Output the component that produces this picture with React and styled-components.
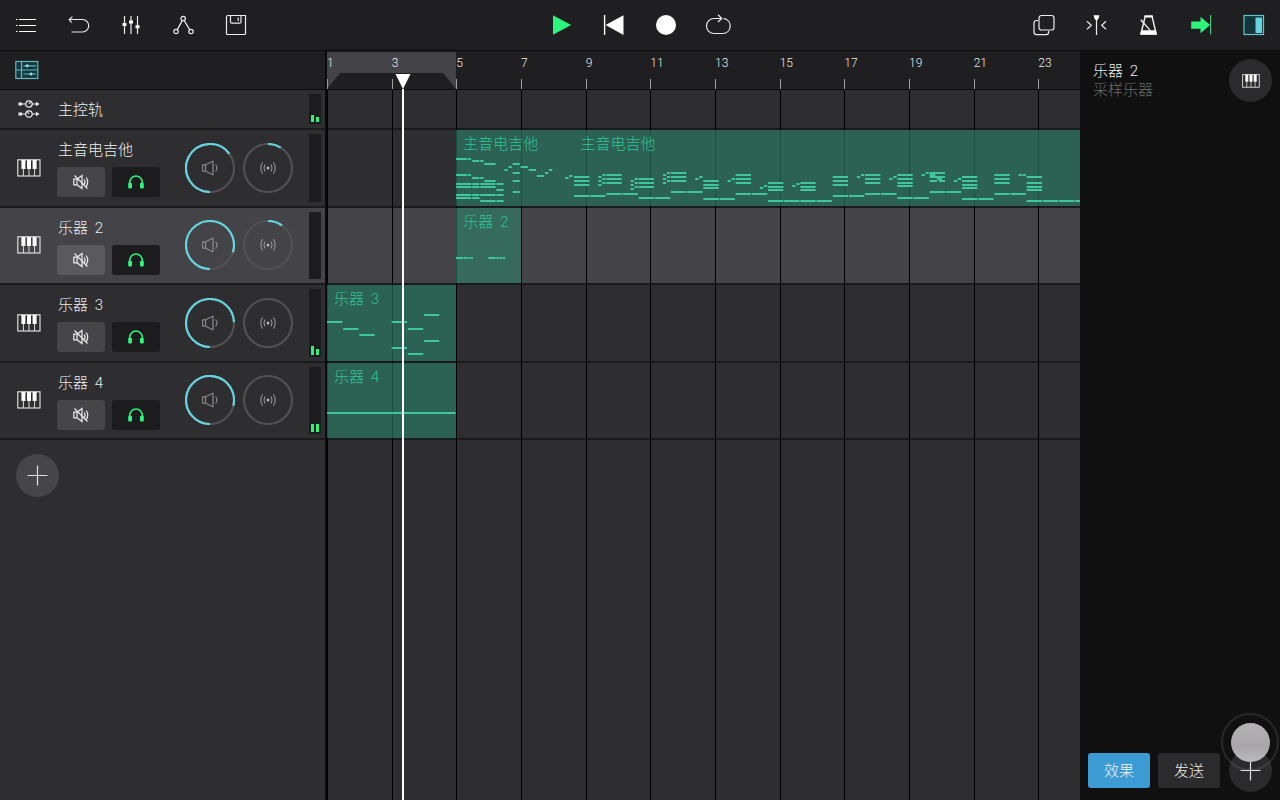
import React, { useLayoutEffect, useRef, useState } from "react";
import styled, { createGlobalStyle, ThemeProvider } from "styled-components";

const theme = {
  bar: "#1f1f21",
  panel: "#2e2e30",
  selected: "#444347",
  inset: "#1c1c1e",
  button: "#464648",
  line: "#0b0b0d",
  separator: "#1b1b1d",
  text: "#ececec",
  cyan: "#66d4e0",
  green: "#2cf57c",
  note: "#40c69c",
  clipText: "#2fc397",
  blue: "#3d9bd3",
  inspector: "#101010",
};

const Global = createGlobalStyle`
  *, *::before, *::after { box-sizing: border-box; }
  html, body { margin: 0; background: #101010; }
  body, button, input {
    font-family: Roboto, "Noto Sans CJK SC", sans-serif;
    font-weight: 300;
    font-size: 15px;
    line-height: 20px;
  }
  button { margin: 0; padding: 0; border: 0; background: none; color: inherit; cursor: pointer; }
  svg { display: block; flex: none; }
`;

/* ---------- timeline metrics ---------- */

const STEPS_PER_COLUMN = 16;
const COLUMN_WIDTH = 194 / 3;
const STEP = COLUMN_WIDTH / STEPS_PER_COLUMN;

/* Number of ruler columns needed to fill the element. */
const useColumns = () => {
  const ref = useRef(null);
  const [columns, setColumns] = useState(12);
  useLayoutEffect(() => {
    const measure = () => setColumns(Math.max(12, Math.ceil(ref.current.clientWidth / COLUMN_WIDTH)));
    measure();
    window.addEventListener("resize", measure);
    return () => window.removeEventListener("resize", measure);
  }, []);
  return [ref, columns];
};

/* ---------- icons ---------- */

const Icon = ({ size = 30, w, h, children }) => (
  <svg
    width={w || size}
    height={h || size}
    viewBox={`0 0 ${w || size} ${h || size}`}
    fill="none"
    stroke="currentColor"
    strokeWidth="1.2"
    aria-hidden="true"
  >
    {children}
  </svg>
);

const MenuIcon = () => (
  <Icon>
    <path d="M8 9.5H25M8 15.5H25M8 21.5H25" stroke="#fff" />
    <path d="M5 9.5H6.5M5 15.5H6.5M5 21.5H6.5" stroke="#fff" />
  </Icon>
);
const UndoIcon = () => (
  <Icon>
    <path d="M5.5 9.5H18.5A6 6 0 0 1 18.5 22H7.5" />
    <path d="M8.4 6.6L5.2 9.5L7.6 12.6" />
  </Icon>
);
const MixerIcon = () => (
  <Icon>
    <path d="M8.5 6V24M15 6V24M21.5 6V24" />
    <path d="M6.5 14.5H10.5M13 12H17M19.5 16.8H23.5" stroke="#fff" strokeWidth="3" />
  </Icon>
);
const AutomationIcon = () => (
  <Icon>
    <circle cx="15.2" cy="8.5" r="2.2" />
    <circle cx="8" cy="21.5" r="2.2" />
    <circle cx="23" cy="21.5" r="2.2" />
    <path d="M14.2 10.6L9.3 19.6M16.2 10.6L21.7 19.6" />
  </Icon>
);
const SaveIcon = () => (
  <Icon>
    <path d="M7 5.5H24.5V23.5Q24.5 24.5 23.5 24.5H6.5Q5.5 24.5 5.5 23.5V7Q5.5 5.5 7 5.5Z" />
    <path d="M9.5 5.5V12Q9.5 13.2 10.7 13.2H18.8Q20 13.2 20 12V5.5M17.2 7.5V11" />
  </Icon>
);
const PlayIcon = () => (
  <Icon>
    <path d="M7 5.2L25.2 15L7 24.8Z" fill="#2cf57c" stroke="none" />
  </Icon>
);
const RewindIcon = () => (
  <Icon>
    <path d="M24.5 5.2V25L6.6 15Z" fill="#fff" stroke="none" />
    <path d="M5.6 5V25" stroke="#fff" strokeWidth="1.4" />
  </Icon>
);
const RecordIcon = () => (
  <Icon>
    <circle cx="15" cy="15" r="10" fill="#fff" stroke="none" />
  </Icon>
);
const LoopIcon = () => (
  <Icon>
    <path d="M17.5 8.5H10A7.5 7.5 0 0 0 10 23.5H19.5A7.6 7.6 0 0 0 20.5 8.6H19.6" />
    <path d="M14 4.8L17.8 8.5L14 12" />
  </Icon>
);
const CopyIcon = () => (
  <Icon>
    <rect x="10" y="5.5" width="15" height="14.5" rx="2.5" />
    <path d="M9 10.5H7.5Q5 10.5 5 13V22Q5 24.7 7.5 24.7H17Q19.7 24.7 19.7 22V21" />
  </Icon>
);
const SnapIcon = () => (
  <Icon>
    <path d="M14.5 9V25" />
    <path d="M11.5 5.2H17.5L16.5 8.5L14.5 11L12.5 8.5Z" fill="#fff" stroke="none" />
    <path d="M5 11.2L9.3 15.2L5 19.2M24 11.2L19.7 15.2L24 19.2" />
  </Icon>
);
const MetronomeIcon = () => (
  <Icon>
    <path d="M11.2 6.2H18L22.2 23.8H7Z" strokeWidth="1.5" />
    <path d="M7.6 20.2H21.6L23 24.8H6Z" fill="#fff" stroke="none" />
    <path d="M6.8 9.8L16.2 20.4" strokeWidth="1.4" />
    <path d="M10.4 5.6H18.8L18.5 7.6H10.7Z" fill="#fff" stroke="none" />
  </Icon>
);
const FollowIcon = () => (
  <Icon>
    <path d="M5.2 11.5H14.5V6.8L24 15L14.5 23.2V18.7H5.2Z" fill="#2cf57c" stroke="none" />
    <path d="M24.6 5V24.6" stroke="#4bbf7a" />
  </Icon>
);
const SidePanelIcon = () => (
  <Icon>
    <rect x="5" y="5.5" width="19.5" height="19" fill="#14353a" stroke="#66c4cf" />
    <rect x="16.5" y="7.5" width="6.5" height="15.5" fill="#66d4e0" stroke="none" />
  </Icon>
);
const TrackViewIcon = () => (
  <Icon w={24} h={20}>
    <rect x="0.8" y="1.5" width="22" height="17" fill="#12393e" stroke="#67b6c0" />
    <path d="M6.5 1.5V18.5M1 10H23" stroke="#67b6c0" />
    <path d="M8.5 5.8H21M8.5 14H21" stroke="#67b6c0" />
    <circle cx="12.2" cy="5.8" r="1.5" fill="#8fe0e8" stroke="none" />
    <circle cx="16" cy="14" r="1.5" fill="#8fe0e8" stroke="none" />
  </Icon>
);
const MasterIcon = () => (
  <Icon w={24} h={20}>
    <circle cx="12" cy="5" r="3.2" />
    <circle cx="12" cy="15" r="3.2" />
    <path d="M4 5H8.8M15.2 5H21M4 15H8.8M15.2 15H21M12 5L13.5 3M12 15L10.5 13" />
    <path d="M1.5 3.4H5V6.6H1.5ZM1.5 13.4H5V16.6H1.5ZM19 2.8L22.5 5L19 7.2ZM19 12.8L22.5 15L19 17.2Z" fill="#eee" stroke="none" />
  </Icon>
);
const KeysIcon = ({ small }) => (
  <svg width={small ? 18 : 24} height={small ? 14 : 18} viewBox="0 0 24 18" preserveAspectRatio="none" fill="none" aria-hidden="true">
    <rect x="0.8" y="0.8" width="22.2" height="16.2" stroke="#ddd" strokeWidth="1.2" />
    <path d="M6.4 10V17M12 10V17M17.6 10V17" stroke="#ddd" />
    <path d="M4.4 1H8.4V10H4.4ZM10 1H14V10H10ZM15.6 1H19.6V10H15.6Z" fill="#fff" />
  </svg>
);
const MuteIcon = () => (
  <Icon w={18} h={16}>
    <path d="M1.8 5.2H5V10.8H1.8ZM5 5.2L10 1.5V14.5L5 10.8" />
    <path d="M12.2 5.5Q14 8 12.2 10.5M14.2 3.5Q17.2 8 14.2 12.5M2.5 1.5L15.5 14.5" />
  </Icon>
);
const HeadphonesIcon = () => (
  <Icon w={18} h={16}>
    <path d="M2.6 11V8.8A6.4 6.8 0 0 1 15.4 8.8V11" stroke="#2cf57c" strokeWidth="1.6" />
    <rect x="1.2" y="8.8" width="3.8" height="5.6" rx="1.2" fill="#2cf57c" stroke="none" />
    <rect x="13" y="8.8" width="3.8" height="5.6" rx="1.2" fill="#2cf57c" stroke="none" />
  </Icon>
);
const PlusIcon = () => (
  <Icon w={21} h={21}>
    <path d="M10.5 0.5V20.5M0.5 10.5H20.5" stroke="#e0e0e0" />
  </Icon>
);

/* ---------- shared parts ---------- */

const Num = styled.span`
  padding-left: 3px;
`;

const TrackName = ({ name, number }) => (
  <>
    {name}
    {number && <> <Num>{number}</Num></>}
  </>
);

const RoundButton = styled.button`
  display: grid;
  place-items: center;
  flex: none;
  width: 43px;
  height: 43px;
  border-radius: 50%;
  background: ${(p) => p.$tone};
`;

/* ---------- toolbar ---------- */

const Shell = styled.div`
  display: flex;
  flex-direction: column;
  height: 100vh;
  overflow: hidden;
  color: ${(p) => p.theme.text};
  background: ${(p) => p.theme.panel};
`;

const Toolbar = styled.header`
  display: flex;
  justify-content: space-between;
  flex: none;
  height: 51px;
  background: ${(p) => p.theme.bar};
  border-bottom: 1px solid ${(p) => p.theme.line};
`;

const ToolGroup = styled.div`
  display: flex;
  width: ${(p) => p.$width}px;
`;

const ToolButton = styled.button`
  display: grid;
  place-items: center;
  flex: 1;
`;

const toolGroups = [
  {
    width: 262,
    tools: [
      ["菜单", MenuIcon],
      ["撤销", UndoIcon],
      ["混音器", MixerIcon],
      ["自动化", AutomationIcon],
      ["保存", SaveIcon],
    ],
  },
  {
    width: 210,
    tools: [
      ["播放", PlayIcon],
      ["回到开头", RewindIcon],
      ["录音", RecordIcon],
      ["循环", LoopIcon],
    ],
  },
  {
    width: 262,
    tools: [
      ["复制", CopyIcon],
      ["吸附", SnapIcon],
      ["节拍器", MetronomeIcon],
      ["跟随", FollowIcon],
      ["侧栏", SidePanelIcon],
    ],
  },
];

/* ---------- track list ---------- */

const Body = styled.main`
  display: flex;
  flex: 1;
  min-height: 0;
`;

const TrackList = styled.section`
  flex: none;
  width: 327px;
  border-right: 2px solid ${(p) => p.theme.line};
`;

const ListHeader = styled.div`
  display: flex;
  align-items: center;
  height: 39px;
  padding-left: 15px;
  background: ${(p) => p.theme.bar};
  border-bottom: 1px solid ${(p) => p.theme.line};
`;

const MasterRow = styled.div`
  display: flex;
  height: 40px;
  padding: 4px 4px 4px 17px;
  border-bottom: 2px solid ${(p) => p.theme.separator};
`;

const MasterName = styled.div`
  flex: 1;
  align-self: center;
  padding: 2px 0 0 1px;
`;

const TrackStack = styled.div`
  display: grid;
  grid-template-rows: repeat(4, 1fr);
  height: 310px;
`;

const TrackRow = styled.div`
  display: flex;
  padding: 4px 4px 4px 17px;
  background: ${(p) => (p.$selected ? p.theme.selected : "transparent")};
  border-bottom: 2px solid ${(p) => p.theme.separator};
`;

const TrackIcon = styled.div`
  display: grid;
  place-items: center;
  width: 24px;
  margin-right: 16px;
`;

const TrackInfo = styled.div`
  flex: 1;
  padding-top: 6px;
`;

const TrackTitle = styled.div`
  padding-left: 1px;
`;

const TrackButtons = styled.div`
  display: flex;
  gap: 7px;
  margin-top: 7px;
`;

const ToggleButton = styled.button`
  display: grid;
  place-items: center;
  width: 48px;
  height: 30px;
  border-radius: 3px;
  background: ${(p) => p.$tone};
`;

const Knobs = styled.div`
  display: flex;
  align-items: center;
  gap: 8px;
  margin-right: 16px;
`;

const KnobLabel = styled.label`
  position: relative;
  display: block;
  width: 50px;
  height: 50px;
`;

const KnobInput = styled.input`
  position: absolute;
  inset: 0;
  width: 100%;
  height: 100%;
  margin: 0;
  opacity: 0;
`;

const MeterBox = styled.div`
  display: flex;
  align-items: flex-end;
  justify-content: center;
  gap: 2px;
  width: 12px;
  padding-bottom: 2px;
  background: ${(p) => p.theme.inset};
`;

const MeterBar = styled.i`
  width: 3px;
  background: ${(p) => p.theme.green};
`;

const AddArea = styled.div`
  padding: 14px 16px;
`;

const Meter = ({ levels = [] }) => (
  <MeterBox>
    {levels.map((l, i) => (
      <MeterBar key={i} style={{ height: l }} />
    ))}
  </MeterBox>
);

const arc = (from, to, r = 24) => {
  const pt = (deg) => {
    const a = ((deg - 90) * Math.PI) / 180;
    return `${(25 + r * Math.cos(a)).toFixed(2)} ${(25 + r * Math.sin(a)).toFixed(2)}`;
  };
  return `M${pt(from)}A${r} ${r} 0 ${to - from > 180 ? 1 : 0} 1 ${pt(to)}`;
};

const Knob = ({ kind, from, to, label }) => (
  <KnobLabel>
    <svg width="50" height="50" viewBox="0 0 50 50" fill="none" aria-hidden="true">
      <circle cx="25" cy="25" r="24" stroke="#515154" strokeWidth="2.2" />
      {to > from && <path d={arc(from, to)} stroke="#66d4e0" strokeWidth="2.2" />}
      {kind === "volume" ? (
        <path
          d="M17.7 21.8H20.7V28.2H17.7ZM20.7 21.8L28 18V32L20.7 28.2M30.8 21.5Q33.6 25 30.8 28.5"
          stroke="#9a9a9c"
        />
      ) : (
        <g stroke="#a0a0a2">
          <circle cx="25" cy="25" r="1.5" fill="#b4b4b6" stroke="none" />
          <path d="M22 21.5Q19.8 25 22 28.5M28 21.5Q30.2 25 28 28.5M19.6 19.3Q16 25 19.6 30.7M30.4 19.3Q34 25 30.4 30.7" />
        </g>
      )}
    </svg>
    <KnobInput type="range" min="0" max="360" defaultValue={to - from} aria-label={label} />
  </KnobLabel>
);

/* ---------- timeline ---------- */

const Timeline = styled.section`
  position: relative;
  display: flex;
  flex-direction: column;
  flex: 1;
  min-width: 0;
  overflow: hidden;
`;

const Ruler = styled.div`
  position: relative;
  display: grid;
  grid-template-columns: repeat(${(p) => p.$columns}, 1fr);
  flex: none;
  height: 39px;
  background: ${(p) => p.theme.bar};
  border-bottom: 1px solid ${(p) => p.theme.line};
`;

const LoopRegion = styled.div`
  position: absolute;
  top: 1px;
  left: 0;
  height: 37px;
  background: ${(p) => p.theme.selected};
  clip-path: polygon(0 0, 100% 0, 100% 100%, calc(100% - 13px) 21px, 13px 21px, 0 100%);
`;

const RulerMark = styled.div`
  position: relative;
  display: flex;
  flex-direction: column;
  justify-content: space-between;
  padding-top: 4px;
  font-size: 12px;
  line-height: 16px;
`;

const Tick = styled.i`
  width: 1px;
  height: 10px;
  background: #a0a0a2;
`;

const Lanes = styled.div`
  position: relative;
  flex: 1;
`;

const GridLines = styled.div`
  position: absolute;
  inset: 0;
  display: grid;
  grid-template-columns: repeat(${(p) => p.$columns}, 1fr);
`;

const GridLine = styled.i`
  border-left: 1px solid #000;
`;

const Lane = styled.div`
  display: grid;
  grid-template-columns: repeat(${(p) => p.$steps}, 1fr);
  min-height: ${(p) => (p.$master ? 40 : 0)}px;
  background: ${(p) => (p.$selected ? p.theme.selected : "transparent")};
  border-bottom: 2px solid ${(p) => p.theme.separator};
`;

const Clip = styled.div`
  position: relative;
  z-index: 1;
  min-width: 0;
  overflow: hidden;
  background: rgba(43, 133, 107, 0.6);
  color: ${(p) => p.theme.clipText};
`;

const ClipName = styled.div`
  padding: 4px 7px;
  white-space: nowrap;
`;

const ClipNotes = styled.svg`
  position: absolute;
  top: 0;
  left: 0;
  width: 100%;
  height: 100%;
`;

const Playhead = styled.div`
  position: absolute;
  z-index: 2;
  top: 23px;
  bottom: 0;
  display: flex;
  flex-direction: column;
  align-items: center;
  width: 16px;
`;

const PlayheadLine = styled.i`
  flex: 1;
  width: 2px;
  background: #fff;
`;

/* ---------- notes: [step, length, y] ---------- */

const introNotes = [
  [0, 2.7, 28], [2.9, 0.8, 28], [4, 1.8, 30], [6, 0.8, 30], [7, 2.8, 33],
  [0, 2.7, 44], [2.9, 0.8, 44], [4, 1.8, 47], [6, 0.8, 47], [7, 2.8, 50],
  [0, 3.8, 53], [4, 1.8, 53], [6, 3.8, 53], [10, 1.8, 53],
  [0, 3.8, 56], [4, 1.8, 56], [6, 3.8, 56], [10, 1.8, 59],
  [0, 3.8, 64], [4, 1.8, 64], [6, 3.8, 64], [10, 1.8, 64],
  [0, 3.8, 67], [4, 1.8, 67], [6, 3.8, 70], [10, 1.8, 70],
  [12, 0.8, 39], [13, 0.8, 36], [14, 1.8, 33], [14, 1.8, 42], [14, 1.8, 50], [14, 1.8, 61],
  [16, 1.8, 36], [18, 1.8, 39], [20, 1.8, 45], [22, 0.8, 42], [23, 0.8, 39],
  [27, 0.8, 47], [28, 0.8, 45],
];

/* One entry per half column: chord pitches, bass pitch and the grace notes before the chord. */
const phrases = [
  { chord: [46, 50, 54], bass: 65 },
  { chord: [44, 48, 52], bass: 63, pre: [[46, 50, 54], [44, 48, 52]] },
  { chord: [48, 52, 56], bass: 67, pre: [[50, 54, 58], [48, 52, 56]] },
  { chord: [42, 46, 50], bass: 61, pre: [[44, 48, 52], [42, 46, 50]] },
  { chord: [50, 54, 57], bass: 68, pre: [[48], [46]] },
  { chord: [44, 48, 52], bass: 63, pre: [[50], [48]] },
  { chord: [52, 56, 59], bass: 70, pre: [[57], [55]] },
  { chord: [52, 56, 59], bass: 70, pre: [[55], [53]] },
  { chord: [46, 50, 54], bass: 65 },
  { chord: [44, 48, 52], bass: 63, pre: [[46], [44]] },
  { chord: [44, 48, 52, 55], bass: 67, pre: [[48], [46]] },
  { chord: [42], bass: 61, pre: [[44], [42]], extra: [[0, 1.4, 44], [0, 3.8, 46], [1.8, 1.2, 48], [0, 1.8, 50], [2.3, 1.5, 50]] },
  { chord: [46, 50, 54, 57], bass: 68, pre: [[50], [48]] },
  { chord: [44, 48, 52], bass: 63 },
  { chord: [46, 52, 56, 59], bass: 70, pre: [[44], [44]] },
  { chord: [], bass: 70 },
];

const verseNotes = phrases.flatMap(({ chord, bass, pre = [[], []], extra = [] }, i) => {
  const s = i * 8;
  return [
    ...chord.map((y) => [s, 3.8, y]),
    [s, 3.8, bass],
    [s + 4, 3.8, bass],
    ...pre[0].map((y) => [s - 2, 0.8, y]),
    ...pre[1].map((y) => [s - 1, 0.8, y]),
    ...extra.map(([o, l, y]) => [s + o, l, y]),
  ];
});

/* Angles are degrees clockwise from the top of the knob; a clip without a length runs to the end. */
const tracks = [
  {
    name: "主音电吉他",
    volume: [180, 414],
    pan: [0, 32],
    clips: [
      { start: 32, length: 29, notes: introNotes },
      { start: 61, notes: verseNotes },
    ],
  },
  {
    name: "乐器",
    number: 2,
    selected: true,
    volume: [180, 468],
    pan: [0, 36],
    clips: [
      {
        start: 32,
        length: 16,
        notes: [
          [0, 1.8, 49], [2, 0.7, 49], [2.9, 0.5, 49], [3.6, 0.6, 49],
          [8, 1.8, 49], [10, 0.7, 49], [10.9, 0.5, 49], [11.6, 0.6, 49],
        ],
      },
    ],
  },
  {
    name: "乐器",
    number: 3,
    volume: [180, 448],
    pan: [0, 0],
    levels: [9, 6],
    clips: [
      {
        start: 0,
        length: 32,
        notes: [
          [0, 3.8, 36], [4, 3.8, 43], [8, 3.8, 49], [16, 3.8, 36], [16, 3.8, 62],
          [20, 3.8, 43], [20, 3.8, 68], [24, 3.8, 29], [24, 3.8, 55],
        ],
      },
    ],
  },
  {
    name: "乐器",
    number: 4,
    volume: [180, 464],
    pan: [0, 0],
    levels: [8, 8],
    clips: [{ start: 0, length: 32, notes: [[0, 31.8, 49]] }],
  },
];

/* ---------- inspector ---------- */

const Inspector = styled.aside`
  display: flex;
  flex-direction: column;
  justify-content: space-between;
  flex: none;
  width: 200px;
  padding: 8px;
  background: ${(p) => p.theme.inspector};
`;

const InspectorHead = styled.div`
  display: flex;
  justify-content: space-between;
  padding-left: 5px;
`;

const InspectorTitles = styled.div`
  padding-top: 2px;
`;

const Subtitle = styled.div`
  line-height: 18px;
  color: #6a6a6c;
`;

const InspectorFoot = styled.div`
  display: flex;
  align-items: center;
  justify-content: space-between;
`;

const Tabs = styled.div`
  display: flex;
  gap: 8px;
`;

const Tab = styled.button`
  width: 62px;
  height: 35px;
  border-radius: 3px;
  color: #f0f0f0;
  background: ${(p) => (p.$active ? p.theme.blue : "#2b2b2d")};
`;

const AddEffect = styled.div`
  position: relative;
`;

const TouchRing = styled.span`
  position: absolute;
  top: -36px;
  left: -8px;
  display: grid;
  place-items: center;
  width: 58px;
  height: 58px;
  border: 2px solid rgba(255, 255, 255, 0.1);
  border-radius: 50%;
  pointer-events: none;
`;

const TouchDot = styled.span`
  width: 39px;
  height: 39px;
  border-radius: 50%;
  background: linear-gradient(rgba(182, 179, 182, 1), rgba(168, 166, 168, 1) 60%, rgba(188, 186, 188, 1));
`;

export default function App() {
  const [timelineRef, columns] = useColumns();
  const songWidth = Math.round(columns * COLUMN_WIDTH);
  const steps = columns * STEPS_PER_COLUMN;

  return (
    <ThemeProvider theme={theme}>
      <Global />
      <Shell>
        <Toolbar>
          {toolGroups.map((group, i) => (
            <ToolGroup key={i} $width={group.width}>
              {group.tools.map(([label, Glyph]) => (
                <ToolButton key={label} aria-label={label}>
                  <Glyph />
                </ToolButton>
              ))}
            </ToolGroup>
          ))}
        </Toolbar>
        <Body>
          <TrackList>
            <ListHeader>
              <button aria-label="轨道视图">
                <TrackViewIcon />
              </button>
            </ListHeader>
            <MasterRow>
              <TrackIcon>
                <MasterIcon />
              </TrackIcon>
              <MasterName>主控轨</MasterName>
              <Meter levels={[7, 5]} />
            </MasterRow>
            <TrackStack>
              {tracks.map((t, i) => (
                <TrackRow key={i} $selected={t.selected}>
                  <TrackIcon>
                    <KeysIcon />
                  </TrackIcon>
                  <TrackInfo>
                    <TrackTitle>
                      <TrackName name={t.name} number={t.number} />
                    </TrackTitle>
                    <TrackButtons>
                      <ToggleButton aria-label="静音" $tone={t.selected ? "#5a595d" : theme.button}>
                        <MuteIcon />
                      </ToggleButton>
                      <ToggleButton aria-label="独奏" $tone={theme.inset}>
                        <HeadphonesIcon />
                      </ToggleButton>
                    </TrackButtons>
                  </TrackInfo>
                  <Knobs>
                    <Knob kind="volume" label="音量" from={t.volume[0]} to={t.volume[1]} />
                    <Knob kind="pan" label="声像" from={t.pan[0]} to={t.pan[1]} />
                  </Knobs>
                  <Meter levels={t.levels} />
                </TrackRow>
              ))}
            </TrackStack>
            <AddArea>
              <RoundButton aria-label="添加轨道" $tone={theme.button}>
                <PlusIcon />
              </RoundButton>
            </AddArea>
          </TrackList>
          <Timeline ref={timelineRef}>
            <Ruler $columns={columns} style={{ width: songWidth }}>
              <LoopRegion style={{ width: Math.round(32 * STEP) }} />
              {Array.from({ length: columns }, (_, i) => (
                <RulerMark key={i}>
                  {i * 2 + 1}
                  <Tick />
                </RulerMark>
              ))}
            </Ruler>
            <Lanes style={{ width: songWidth }}>
              <GridLines $columns={columns}>
                {Array.from({ length: columns }, (_, i) => (
                  <GridLine key={i} />
                ))}
              </GridLines>
              <Lane $master $steps={steps} />
              <TrackStack>
                {tracks.map((t, i) => (
                  <Lane key={i} $selected={t.selected} $steps={steps}>
                    {t.clips.map((c, j) => (
                      <Clip key={j} style={{ gridColumn: `${c.start + 1} / ${c.length ? c.start + c.length + 1 : -1}` }}>
                        <ClipNotes aria-hidden="true">
                          {c.notes.map(([s, len, y], k) => (
                            <rect key={k} x={s * STEP} y={y} width={len * STEP} height="2" fill={theme.note} />
                          ))}
                        </ClipNotes>
                        <ClipName>
                          <TrackName name={t.name} number={t.number} />
                        </ClipName>
                      </Clip>
                    ))}
                  </Lane>
                ))}
              </TrackStack>
            </Lanes>
            <Playhead style={{ left: Math.floor(19 * STEP) - 8 }}>
              <svg width="16" height="15" viewBox="0 0 16 15" aria-hidden="true">
                <path d="M0.5 0H15.5L8 15Z" fill="#fff" />
              </svg>
              <PlayheadLine />
            </Playhead>
          </Timeline>
          <Inspector>
            <InspectorHead>
              <InspectorTitles>
                <div>
                  <TrackName name="乐器" number={2} />
                </div>
                <Subtitle>采样乐器</Subtitle>
              </InspectorTitles>
              <RoundButton aria-label="乐器" $tone="#2b2b2d">
                <KeysIcon small />
              </RoundButton>
            </InspectorHead>
            <InspectorFoot>
              <Tabs>
                <Tab $active>效果</Tab>
                <Tab>发送</Tab>
              </Tabs>
              <AddEffect>
                <RoundButton aria-label="添加效果" $tone="#2b2b2d">
                  <PlusIcon />
                </RoundButton>
                <TouchRing>
                  <TouchDot />
                </TouchRing>
              </AddEffect>
            </InspectorFoot>
          </Inspector>
        </Body>
      </Shell>
    </ThemeProvider>
  );
}
